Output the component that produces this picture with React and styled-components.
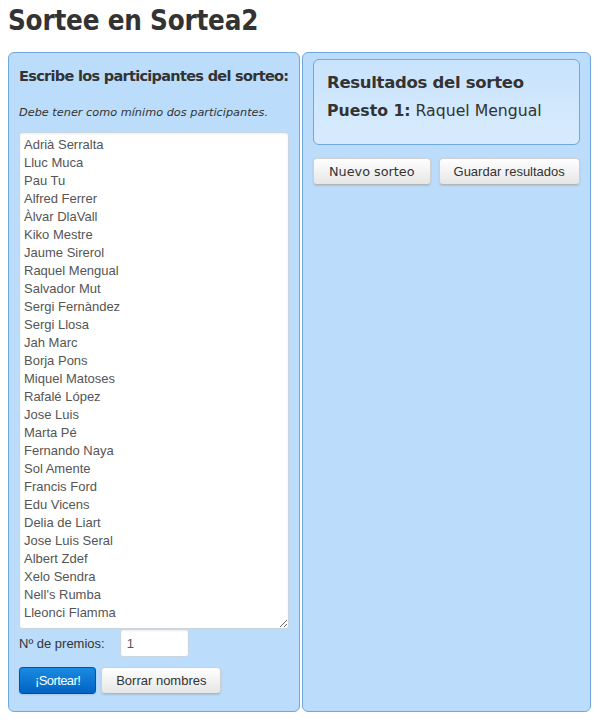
import React, { useState } from "react";
import styled, { createGlobalStyle } from "styled-components";

const GlobalStyle = createGlobalStyle`
  html, body {
    margin: 0;
    padding: 0;
    background: #ffffff;
  }
  body {
    font-family: "Liberation Sans", Arial, sans-serif;
    color: #333;
  }
`;

const names = [
  "Adrià Serralta",
  "Lluc Muca",
  "Pau Tu",
  "Alfred Ferrer",
  "Àlvar DlaVall",
  "Kiko Mestre",
  "Jaume Sirerol",
  "Raquel Mengual",
  "Salvador Mut",
  "Sergi Fernàndez",
  "Sergi Llosa",
  "Jah Marc",
  "Borja Pons",
  "Miquel Matoses",
  "Rafalé López",
  "Jose Luis",
  "Marta Pé",
  "Fernando Naya",
  "Sol Amente",
  "Francis Ford",
  "Edu Vicens",
  "Delia de Liart",
  "Jose Luis Seral",
  "Albert Zdef",
  "Xelo Sendra",
  "Nell's Rumba",
  "Lleonci Flamma",
];

export default function App() {
  const [list, setList] = useState(names.join("\n"));
  const [prizes, setPrizes] = useState("1");

  return (
    <Page>
      <GlobalStyle />
      <Title>Sortee en Sortea2</Title>
      <Columns>
        <Panel>
          <PanelTitle>Escribe los participantes del sorteo:</PanelTitle>
          <Note>Debe tener como mínimo dos participantes.</Note>
          <Names
            value={list}
            onChange={(e) => setList(e.target.value)}
            spellCheck={false}
          />
          <PrizeRow>
            <Label>Nº de premios:</Label>
            <PrizeInput value={prizes} onChange={(e) => setPrizes(e.target.value)} />
          </PrizeRow>
          <Actions top={10} gap={5}>
            <Button primary>¡Sortear!</Button>
            <Button>Borrar nombres</Button>
          </Actions>
        </Panel>
        <Panel>
          <Results>
            <ResultsTitle>Resultados del sorteo</ResultsTitle>
            <Winner>
              <b>Puesto 1:</b> Raquel Mengual
            </Winner>
          </Results>
          <Actions top={13} gap={8}>
            <Button wide>Nuevo sorteo</Button>
            <Button>Guardar resultados</Button>
          </Actions>
        </Panel>
      </Columns>
    </Page>
  );
}

const Page = styled.div`
  width: 583px;
  padding: 0 0 0 8px;
`;

const Title = styled.h1`
  margin: 0;
  padding-top: 3px;
  height: 48px;
  font-family: "DejaVu Sans Condensed", "DejaVu Sans", sans-serif;
  font-weight: bold;
  font-size: 27.5px;
  line-height: 34px;
  color: #333;
  letter-spacing: -0.2px;
  white-space: nowrap;
`;

const Columns = styled.div`
  display: grid;
  grid-template-columns: 292px 289px;
  gap: 2px;
  margin-top: 1px;
`;

const Panel = styled.div`
  background: #bbddfb;
  border: 1px solid #6fa8dc;
  border-radius: 6px;
  height: 660px;
  box-sizing: border-box;
  padding: 6px 10px 0 10px;
`;

const PanelTitle = styled.h3`
  margin: 6px 0 0 0;
  font-family: "DejaVu Sans", sans-serif;
  font-weight: bold;
  font-size: 14.5px;
  line-height: 22px;
  letter-spacing: -0.7px;
  white-space: nowrap;
  color: #333;
`;

const Note = styled.p`
  margin: 19px 0 0 0;
  font-family: "DejaVu Sans", Verdana, sans-serif;
  font-style: italic;
  font-size: 11.3px;
  line-height: 14px;
  white-space: nowrap;
  color: #333;
`;

const Names = styled.textarea`
  display: block;
  box-sizing: border-box;
  width: 270px;
  height: 497px;
  margin: 12px 0 0 0;
  padding: 3px 4px;
  border: 1px solid #c9d5df;
  border-radius: 3px;
  background: #fff;
  font-family: "Liberation Sans", Arial, sans-serif;
  font-size: 13px;
  line-height: 18px;
  color: #555;
  resize: vertical;
  outline: none;
  overflow: hidden;
  box-shadow: inset 0 1px 2px rgba(0, 0, 0, 0.08);
`;

const PrizeRow = styled.div`
  display: flex;
  align-items: center;
  gap: 15px;
  height: 28px;
`;

const Label = styled.span`
  font-family: "Liberation Sans", Arial, sans-serif;
  font-size: 13px;
  color: #333;
`;

const PrizeInput = styled.input`
  box-sizing: border-box;
  width: 69px;
  height: 28px;
  padding: 4px 6px;
  border: 1px solid #c9d5df;
  border-radius: 3px;
  font-family: "Liberation Sans", Arial, sans-serif;
  font-size: 13px;
  color: #555;
  outline: none;
  box-shadow: inset 0 1px 2px rgba(0, 0, 0, 0.08);
`;

const Actions = styled.div`
  display: flex;
  gap: ${(p) => p.gap}px;
  margin-top: ${(p) => p.top}px;
`;

const Button = styled.button`
  box-sizing: border-box;
  flex-shrink: 0;
  white-space: nowrap;
  height: 27px;
  padding: 0 ${(p) => (p.wide ? "15px" : p.primary ? "15px" : "14px")};
  border-radius: 4px;
  border: 1px solid ${(p) => (p.primary ? "#0055aa" : "#cfcfcf")};
  border-bottom-color: ${(p) => (p.primary ? "#004a99" : "#b5b5b5")};
  background: ${(p) =>
    p.primary
      ? "linear-gradient(#1a8ae0, #0064c4)"
      : "linear-gradient(#ffffff, #e6e6e6)"};
  color: ${(p) => (p.primary ? "#fff" : "#333")};
  font-family: ${(p) =>
    p.wide
      ? '"DejaVu Sans", Verdana, sans-serif'
      : '"Liberation Sans", Arial, sans-serif'};
  font-size: ${(p) => (p.wide ? "12.8px" : "13px")};
  letter-spacing: ${(p) => (p.primary ? "-0.6px" : "0")};
  box-shadow: 0 1px 2px rgba(0, 0, 0, 0.12);
  cursor: pointer;
`;

const Results = styled.div`
  box-sizing: border-box;
  height: 86px;
  margin-top: 0;
  padding: 12px 13px;
  border: 1px solid #6fa8dc;
  border-radius: 6px;
  background: linear-gradient(#c8e3fc, #d8ebfd);
`;

const ResultsTitle = styled.h3`
  margin: 0;
  font-family: "DejaVu Sans", sans-serif;
  font-weight: bold;
  font-size: 16.5px;
  line-height: 22px;
  letter-spacing: -0.3px;
  color: #333;
`;

const Winner = styled.p`
  margin: 7px 0 0 0;
  font-family: "DejaVu Sans", Verdana, sans-serif;
  font-size: 15.7px;
  line-height: 20px;
  color: #333;

  b {
    font-weight: bold;
  }
`;
